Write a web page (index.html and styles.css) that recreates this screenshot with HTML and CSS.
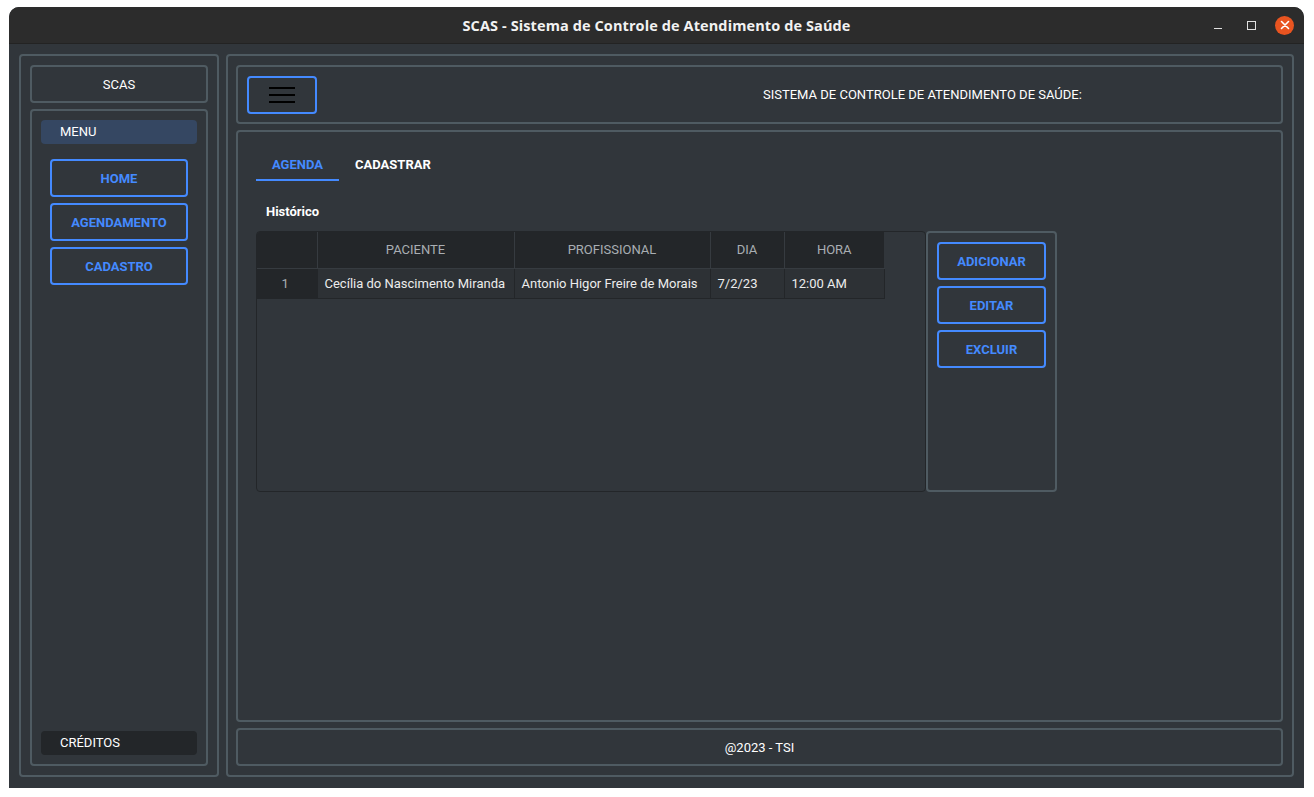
FILE: index.html
```html
<!DOCTYPE html>
<html lang="pt-BR">
<head>
<meta charset="utf-8">
<title>SCAS</title>
<link rel="stylesheet" href="styles.css">
</head>
<body>
<div class="window">
  <div class="titlebar">
    <div class="title">SCAS - Sistema de Controle de Atendimento de Saúde</div>
    <div class="controls">
      <span class="ctl-min"></span>
      <span class="ctl-max"></span>
      <span class="ctl-close">
        <svg width="10" height="10" viewBox="0 0 10 10"><path d="M1.5 1.5 L8.5 8.5 M8.5 1.5 L1.5 8.5" stroke="#fff" stroke-width="1.6" stroke-linecap="round"/></svg>
      </span>
    </div>
  </div>
  <div class="main">
    <aside class="sidebar">
      <div class="brand">SCAS</div>
      <div class="menu">
        <div class="menu-label">MENU</div>
        <nav class="nav">
          <button class="btn nav-btn">HOME</button>
          <button class="btn nav-btn">AGENDAMENTO</button>
          <button class="btn nav-btn">CADASTRO</button>
        </nav>
        <div class="credits">CRÉDITOS</div>
      </div>
    </aside>
    <section class="content-area">
      <header class="topbar">
        <button class="hamburger"><span></span><span></span><span></span></button>
        <div class="heading">SISTEMA DE CONTROLE DE ATENDIMENTO DE SAÚDE:</div>
      </header>
      <div class="panel">
        <div class="tabs">
          <div class="tab active">AGENDA</div>
          <div class="tab">CADASTRAR</div>
        </div>
        <div class="section-title">Histórico</div>
        <div class="table-row">
          <div class="table-wrap">
            <table class="grid">
              <colgroup>
                <col class="c-idx"><col class="c-pac"><col class="c-pro"><col class="c-dia"><col class="c-hora">
              </colgroup>
              <thead>
                <tr><th></th><th>PACIENTE</th><th>PROFISSIONAL</th><th>DIA</th><th>HORA</th></tr>
              </thead>
              <tbody>
                <tr><td class="idx">1</td><td>Cecília do Nascimento Miranda</td><td>Antonio Higor Freire de Morais</td><td>7/2/23</td><td>12:00 AM</td></tr>
              </tbody>
            </table>
          </div>
          <div class="actions">
            <button class="btn act-btn">ADICIONAR</button>
            <button class="btn act-btn">EDITAR</button>
            <button class="btn act-btn">EXCLUIR</button>
          </div>
        </div>
      </div>
      <footer class="footer">@2023 - TSI</footer>
    </section>
  </div>
</div>
</body>
</html>
```

FILE: styles.css
```css
* { box-sizing: border-box; }
html, body { margin: 0; padding: 0; background: #ffffff; }
body { font-family: Roboto, "Liberation Sans", sans-serif; color: #ffffff; }

.window {
  margin: 7px 0 0 9px;
  width: 1295px;
  height: 781px;
  background: #31363b;
  border-radius: 10px 10px 0 0;
  overflow: hidden;
  display: flex;
  flex-direction: column;
}

.titlebar {
  height: 37px;
  flex: none;
  background: #2c2c2c;
  border-bottom: 1px solid #232323;
  position: relative;
  display: flex;
  align-items: center;
  justify-content: center;
}
.title {
  font-family: "Open Sans", "DejaVu Sans", sans-serif;
  font-weight: 700;
  font-size: 14.5px;
  color: #f2f2f2;
  letter-spacing: 0.1px;
}
.controls {
  position: absolute;
  right: 10px;
  top: 0;
  height: 36px;
  display: flex;
  align-items: center;
}
.ctl-min { width: 8px; height: 1px; background: #e0e0e0; margin-top: 6px; margin-right: 25px; }
.ctl-max { width: 9px; height: 9px; border: 1px solid #e0e0e0; margin-right: 19px; }
.ctl-close {
  width: 19px; height: 19px; border-radius: 50%;
  background: #e95420;
  display: flex; align-items: center; justify-content: center;
}

.main {
  flex: 1;
  display: flex;
  gap: 7px;
  padding: 10px 10px 11px 10px;
  min-height: 0;
}

.sidebar {
  width: 200px;
  flex: none;
  border: 2px solid #4f5b62;
  border-radius: 4px;
  padding: 9px;
  display: flex;
  flex-direction: column;
  gap: 6px;
}
.brand {
  height: 38px;
  border: 2px solid #4f5b62;
  border-radius: 4px;
  display: flex; align-items: center; justify-content: center;
  font-size: 13px;
}
.menu {
  flex: 1;
  border: 2px solid #4f5b62;
  border-radius: 4px;
  padding: 9px;
  display: flex;
  flex-direction: column;
}
.menu-label, .credits {
  height: 24px;
  line-height: 24px;
  border-radius: 4px;
  padding-left: 19px;
  font-size: 13px;
}
.menu-label { background: #354762; }
.credits { background: #232629; margin-top: auto; }
.nav {
  margin-top: 15px;
  padding-left: 9px;
  display: flex;
  flex-direction: column;
  gap: 6px;
}

.btn {
  height: 38px;
  background: transparent;
  border: 2px solid #448aff;
  border-radius: 4px;
  color: #448aff;
  font-family: Roboto, "Liberation Sans", sans-serif;
  font-weight: 700;
  font-size: 13px;
  padding: 0;
  cursor: pointer;
}
.nav-btn { width: 138px; }

.content-area {
  flex: 1;
  border: 2px solid #4f5b62;
  border-radius: 4px;
  padding: 9px 9px 9px 8px;
  display: flex;
  flex-direction: column;
  gap: 6px;
}
.topbar {
  height: 59px;
  flex: none;
  border: 2px solid #4f5b62;
  border-radius: 4px;
  padding: 9px;
  display: flex;
  align-items: flex-start;
}
.hamburger {
  width: 70px;
  height: 38px;
  background: transparent;
  border: 2px solid #448aff;
  border-radius: 4px;
  display: flex;
  flex-direction: column;
  align-items: center;
  justify-content: center;
  gap: 5px;
  padding: 0;
}
.hamburger span { display: block; width: 26px; height: 2px; background: #000; }
.heading {
  margin-left: 446px;
  line-height: 38px;
  font-size: 13px;
}

.panel {
  flex: 1;
  border: 2px solid #4f5b62;
  border-radius: 4px;
  padding: 17px 18px;
  display: flex;
  flex-direction: column;
}
.tabs { display: flex; }
.tab {
  height: 32px;
  line-height: 31px;
  padding: 0 16px;
  font-size: 13px;
  font-weight: 700;
  color: #ffffff;
  border-bottom: 2px solid transparent;
}
.tab.active { color: #448aff; border-bottom-color: #448aff; }

.section-title {
  margin: 21px 0 0 10px;
  line-height: 20px;
  font-size: 13px;
  font-weight: 700;
}

.table-row {
  margin-top: 9px;
  display: flex;
}
.table-wrap {
  width: 670px;
  height: 261px;
  border: 1px solid #232629;
  border-radius: 4px;
  overflow: hidden;
}
.grid {
  border-collapse: collapse;
  table-layout: fixed;
  width: 627px;
  font-size: 13px;
}
.c-idx { width: 60px; }
.c-pac { width: 197px; }
.c-pro { width: 196px; }
.c-dia { width: 74px; }
.c-hora { width: 100px; }
.grid th {
  height: 36px;
  background: #232629;
  color: #a9aeb3;
  font-weight: 400;
  text-align: center;
  border-right: 1px solid #363b40;
  border-bottom: 1px solid #363b40;
  padding: 0;
}
.grid th:last-child { border-right: none; }
.grid td {
  height: 30px;
  background: #2d3135;
  color: #ececec;
  padding: 0 7px;
  border-right: 1px solid #232629;
  border-bottom: 1px solid #232629;
  white-space: nowrap;
}
.grid td.idx {
  background: #232629;
  color: #a9aeb3;
  text-align: center;
  padding: 0 3px 0 0;
}

.actions {
  width: 131px;
  height: 261px;
  border: 2px solid #4f5b62;
  border-radius: 4px;
  padding: 9px;
  display: flex;
  flex-direction: column;
  gap: 6px;
}
.act-btn { width: 109px; }

.footer {
  height: 38px;
  flex: none;
  border: 2px solid #4f5b62;
  border-radius: 4px;
  display: flex;
  align-items: center;
  justify-content: center;
  font-size: 13px;
}
```
